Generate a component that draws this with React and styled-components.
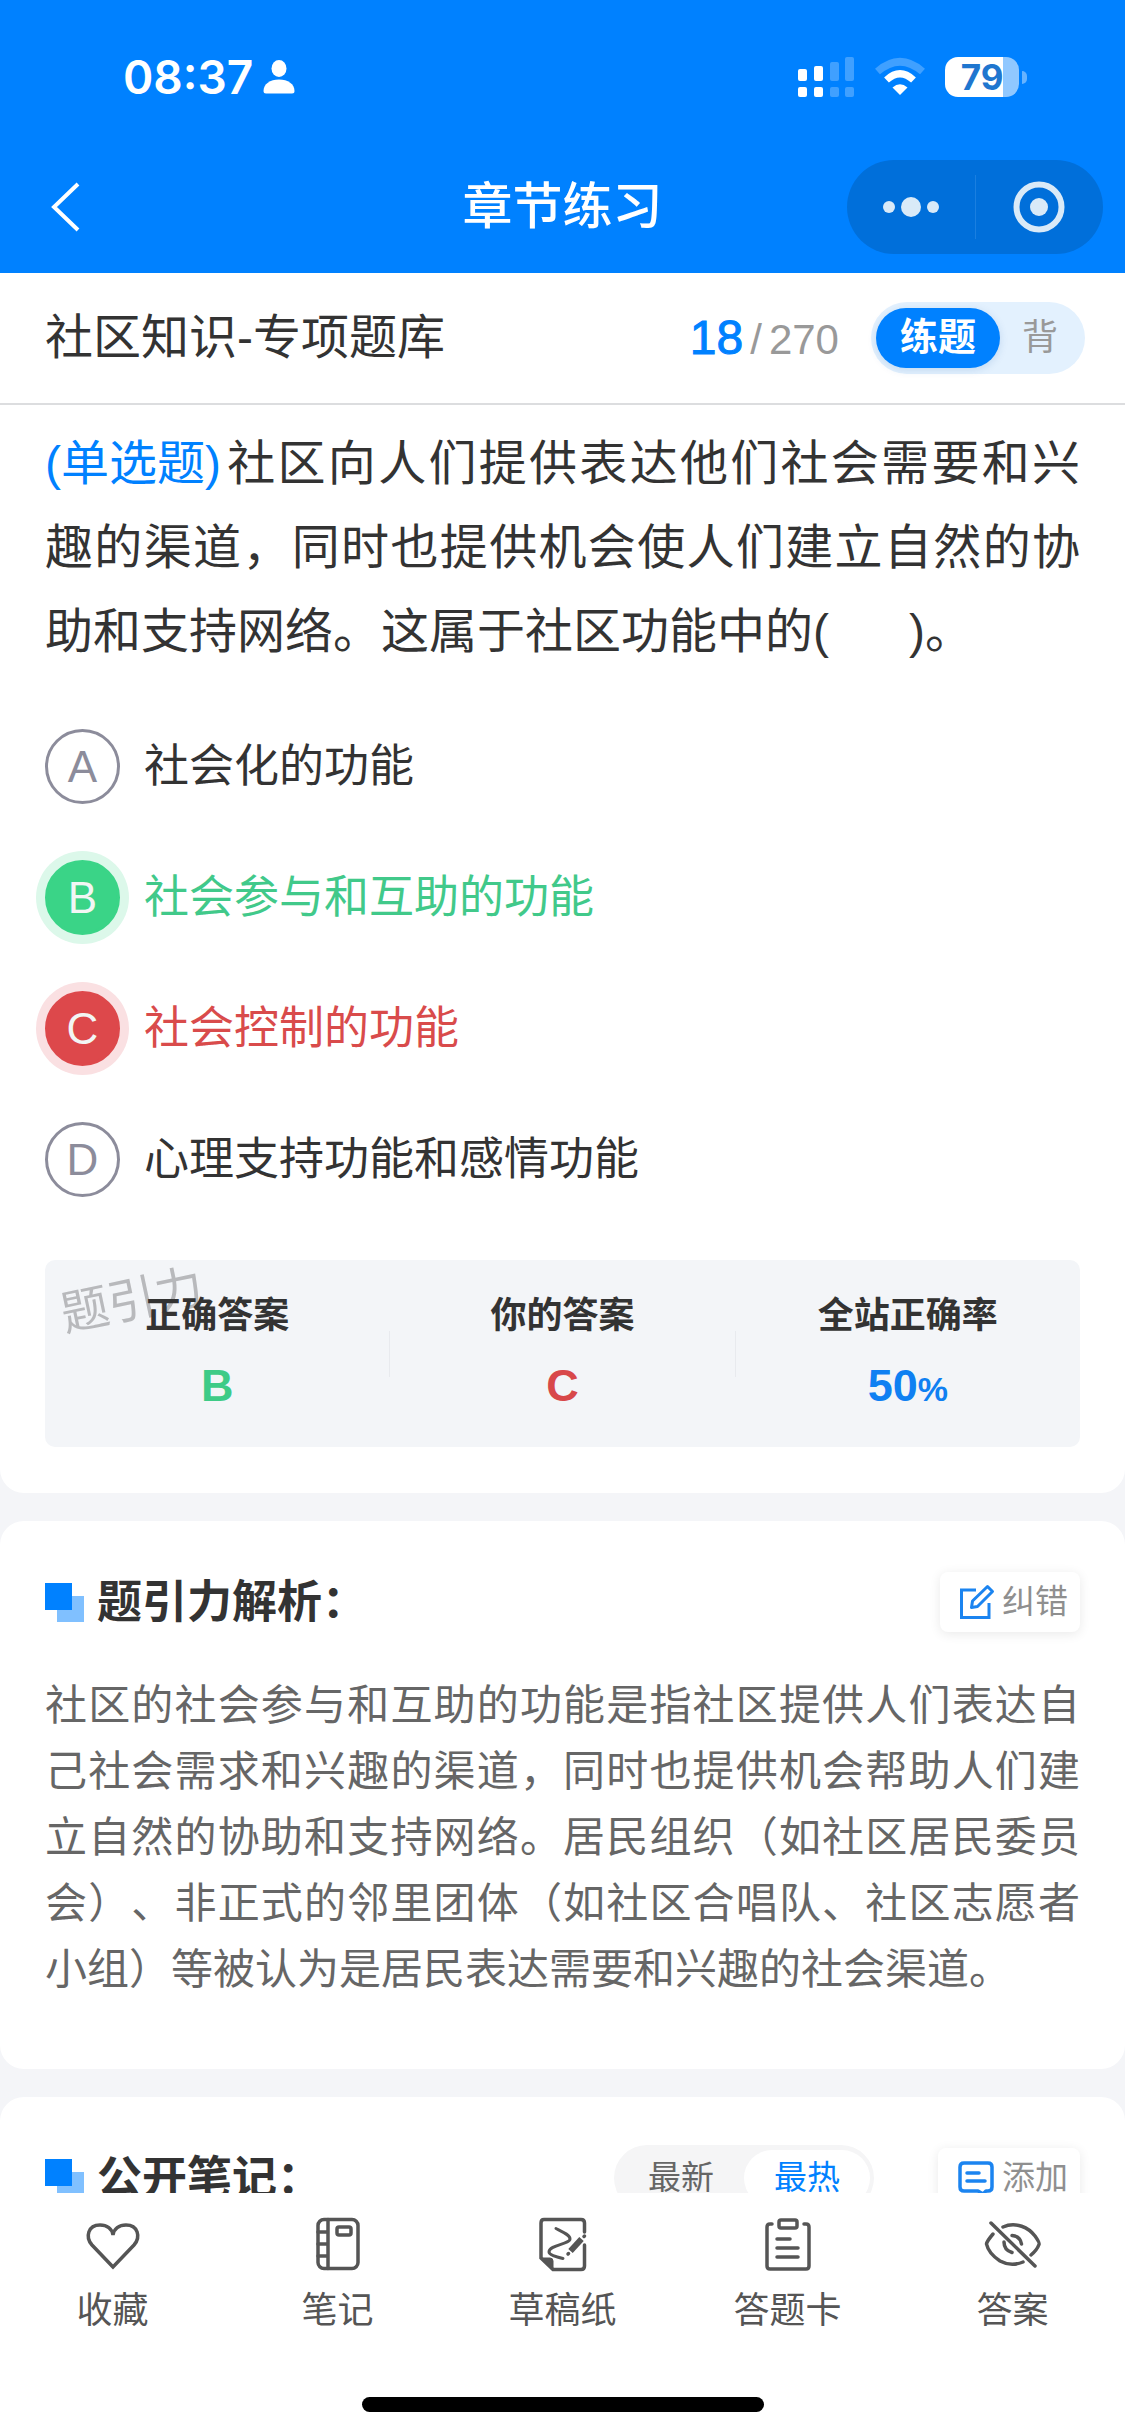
import React from 'react'
import styled, { createGlobalStyle, css } from 'styled-components'

const GlobalStyle = createGlobalStyle`
  * {
    box-sizing: border-box;
  }
  body {
    margin: 0;
    color: #333;
    background: #f4f5f8;
    font-family: 'Liberation Sans', 'Noto Sans CJK SC', sans-serif;
    line-height: 1.4;
    text-spacing-trim: space-all;
  }
  button {
    margin: 0;
    padding: 0;
    border: 0;
    background: none;
    color: inherit;
    font: inherit;
  }
  h1, h2, p {
    margin: 0;
  }
  svg {
    display: block;
    overflow: visible;
  }
`

const StyledPage = styled.div`
  display: flex;
  flex-direction: column;
  height: 100vh;
`

const StyledHeader = styled.header`
  flex: none;
  padding-bottom: 13px;
  background: #0081ff;
  color: #fff;
`

const StyledStatusBar = styled.div`
  display: flex;
  align-items: center;
  justify-content: space-between;
  height: 154px;
  padding: 0 98px 0 123px;
  font-family: Inter, sans-serif;
`

const StyledTime = styled.div`
  display: flex;
  align-items: center;
  gap: 10px;
  font-size: 46px;
  font-weight: 600;
`

const StyledStatusIcons = styled.div`
  display: flex;
  align-items: center;
  gap: 20px;
`

const StyledBattery = styled.div`
  display: flex;
  align-items: center;
  gap: 3px;

  span {
    width: 74px;
    height: 40px;
    border-radius: 13px;
    background: linear-gradient(to right, #fff 79%, #90c8ff 79%);
    color: #1f76cf;
    font-size: 35px;
    font-weight: 700;
    line-height: 40px;
    text-align: center;
  }
  &::after {
    content: '';
    width: 5px;
    height: 13px;
    border-radius: 0 5px 5px 0;
    background: #66b3ff;
  }
`

const StyledNav = styled.nav`
  display: grid;
  grid-template-columns: 1fr auto 1fr;
  align-items: center;
  height: 106px;
  padding: 0 22px;
`

const StyledBack = styled.button`
  justify-self: start;
  padding: 12px 28px;
`

const StyledNavTitle = styled.h1`
  font-size: 50px;
  font-weight: 500;
`

const StyledCapsule = styled.div`
  justify-self: end;
  display: flex;
  align-items: center;
  width: 256px;
  height: 94px;
  border-radius: 47px;
  background: #006fda;

  button {
    display: flex;
    flex: 1;
    justify-content: center;
  }
  button + button {
    border-left: 1px solid #1a7fe0;
    padding: 6px 0;
  }
`

const StyledBankBar = styled.div`
  display: flex;
  flex: none;
  align-items: center;
  height: 132px;
  padding: 0 40px 0 45px;
  border-bottom: 2px solid #dcdddf;
  background: #fff;
`

const StyledBankName = styled.h2`
  flex: 1;
  font-size: 48px;
  font-weight: 400;
`

const StyledCounter = styled.div`
  display: flex;
  align-items: baseline;
  gap: 7px;
  margin-right: 32px;
  color: #999;
  font-size: 42px;

  strong {
    color: #0081ff;
    font-size: 48px;
    font-weight: 400;
    -webkit-text-stroke: 1px #0081ff;
  }
`

const StyledModeSwitch = styled.div`
  display: flex;
  align-items: center;
  height: 72px;
  padding: 0 5px;
  border-radius: 36px;
  background: #e3f1fe;
`

const StyledMode = styled.button`
  height: 60px;
  padding: 0 22px;
  border-radius: 30px;
  color: #999;
  font-size: 36px;

  ${props =>
    props.$active &&
    css`
      padding: 0 24px;
      background: #0081ff;
      color: #fff;
      font-size: 38px;
      font-weight: 700;
      box-shadow: 0 2px 8px rgba(0, 80, 160, 0.15);
    `}
`

const StyledContent = styled.main`
  flex: 1;
  min-height: 0;
  overflow-y: auto;
  scrollbar-width: none;
`

const StyledCard = styled.section`
  margin-top: 28px;
  padding: 48px 45px 66px;
  border-radius: 24px;
  background: #fff;
`

const StyledQuestionCard = styled(StyledCard)`
  margin-top: 0;
  padding: 17px 45px 46px;
  border-radius: 0 0 24px 24px;
`

const StyledQuestion = styled.p`
  font-size: 48px;
  line-height: 84px;
  text-align: justify;

  span {
    display: inline-block;
    margin-right: 4px;
    color: #0081ff;
  }
`

const StyledOptions = styled.div`
  display: flex;
  flex-direction: column;
  gap: 56px;
  margin: 55px 0 63px;
`

const optionColors = {
  right: { fill: '#3ad487', text: '#41c98a', halo: '#dcf8ea' },
  wrong: { fill: '#dd484b', text: '#d94b4b', halo: '#fae0e2' }
}

const StyledOption = styled.label`
  display: flex;
  align-items: center;
  gap: 24px;
  height: 75px;
  color: ${props => (props.$state ? optionColors[props.$state].text : '#333')};
  font-size: 45px;

  input {
    position: absolute;
    opacity: 0;
  }
`

const StyledLetter = styled.span`
  display: flex;
  align-items: center;
  justify-content: center;
  width: 75px;
  height: 75px;
  border: 3px solid #8c8c9b;
  border-radius: 50%;
  color: #8c8c9b;
  font-size: 44px;

  ${props =>
    props.$state &&
    css`
      border-color: ${optionColors[props.$state].fill};
      background: ${optionColors[props.$state].fill};
      box-shadow: 0 0 0 9px ${optionColors[props.$state].halo};
      color: #f2f6f4;
    `}
`

const StyledResult = styled.div`
  position: relative;
  display: flex;
  align-items: center;
  padding: 31px 0;
  border-radius: 10px;
  background: #f3f5f8;
`

const StyledWatermark = styled.span`
  position: absolute;
  top: 11px;
  left: 15px;
  color: #b8b9bc;
  font-size: 48px;
  line-height: 60px;
  transform: rotate(-12deg);
`

const StyledStat = styled.div`
  position: relative;
  flex: 1;
  color: ${props => props.color};
  font-size: 45px;
  font-weight: 700;
  line-height: 60px;
  text-align: center;

  p {
    margin-bottom: 15px;
    color: #333;
    font-size: 36px;
    line-height: 50px;
  }
  small {
    font-size: 34px;
    line-height: 1;
  }
`

const StyledDivider = styled.div`
  width: 1px;
  height: 46px;
  background: #e8eaee;
`

const StyledCardHead = styled.div`
  display: flex;
  align-items: center;
  height: 66px;
`

const StyledCardTitle = styled.h2`
  display: flex;
  flex: 1;
  align-items: center;
  gap: 13px;
  font-size: 45px;
  font-weight: 700;
`

const StyledSmallButton = styled.button`
  display: flex;
  align-items: center;
  gap: 8px;
  height: 60px;
  padding: 0 12px 0 20px;
  border-radius: 8px;
  background: #fff;
  box-shadow: 0 2px 12px rgba(0, 0, 0, 0.09);
  color: #8f8f8f;
  font-size: 33px;
`

const StyledAnalysis = styled.p`
  margin-top: 38px;
  color: #666;
  font-size: 42px;
  line-height: 66px;
  text-align: justify;
`

const StyledSort = styled.div`
  display: flex;
  align-items: center;
  height: 66px;
  margin-right: 64px;
  padding: 0 4px;
  border-radius: 33px;
  background: #f5f5f6;
`

const StyledSortItem = styled.button`
  height: 56px;
  padding: 0 30px;
  border-radius: 28px;
  background: ${props => (props.$active ? '#fff' : 'none')};
  color: ${props => (props.$active ? '#0081ff' : '#666')};
  font-size: 33px;
`

const StyledTabBar = styled.footer`
  flex: none;
  padding: 24px 0;
  background: #fff;
`

const StyledTabs = styled.div`
  display: grid;
  grid-template-columns: repeat(5, 1fr);
`

const StyledTab = styled.button`
  display: flex;
  flex-direction: column;
  align-items: center;
  gap: 15px;
  color: #555;
  font-size: 36px;
  line-height: 50px;
`

const StyledHomeIndicator = styled.div`
  width: 402px;
  height: 15px;
  margin: 61px auto 0;
  border-radius: 8px;
  background: #000;
`

function PersonIcon() {
  return (
    <svg width="32" height="34" viewBox="0 0 32 34" fill="#fff">
      <ellipse cx="16" cy="8.5" rx="7.5" ry="8.5" />
      <path d="M0.5 31C0.5 24 7 19.5 16 19.5S31.5 24 31.5 31Q31.5 33.5 29 33.5H3Q0.5 33.5 0.5 31Z" />
    </svg>
  )
}

function SignalIcon() {
  return (
    <svg width="57" height="40" viewBox="0 0 57 40" fill="#fff">
      <rect x="0" y="12" width="9" height="12" rx="2" />
      <rect x="0" y="30" width="9" height="10" rx="2" />
      <rect x="16" y="9" width="9" height="15" rx="2" />
      <rect x="16" y="30" width="9" height="10" rx="2" />
      <g opacity="0.25">
        <rect x="32" y="5" width="9" height="19" rx="2" />
        <rect x="32" y="30" width="9" height="10" rx="2" />
        <rect x="47" y="0" width="9" height="24" rx="2" />
        <rect x="47" y="30" width="9" height="10" rx="2" />
      </g>
    </svg>
  )
}

function WifiIcon() {
  return (
    <svg width="50" height="38" viewBox="0 0 50 38" fill="none" stroke="#fff">
      <path d="M2.5 13.5Q25 -6 47.5 13.5" strokeWidth="7.5" opacity="0.25" />
      <path d="M11.5 22Q25 9.5 38.5 22" strokeWidth="7" />
      <path d="M17.5 29.5Q25 23 32.5 29.5L25 37Z" fill="#fff" stroke="none" />
    </svg>
  )
}

function BackIcon() {
  return (
    <svg width="30" height="50" viewBox="0 0 30 50" fill="none" stroke="#fff" strokeWidth="4">
      <path d="M28 2L4 25L28 48" />
    </svg>
  )
}

function DotsIcon() {
  return (
    <svg width="56" height="20" viewBox="0 0 56 20" fill="#d9eaf8">
      <circle cx="6" cy="10" r="6" />
      <circle cx="28" cy="10" r="10" />
      <circle cx="50" cy="10" r="6" />
    </svg>
  )
}

function TargetIcon() {
  return (
    <svg width="52" height="52" viewBox="0 0 52 52" fill="none">
      <circle cx="26" cy="26" r="22.5" stroke="#d9eaf8" strokeWidth="6" />
      <circle cx="26" cy="26" r="9" fill="#d9eaf8" />
    </svg>
  )
}

function SquaresIcon() {
  return (
    <svg width="39" height="39" viewBox="0 0 39 39">
      <rect x="12" y="13" width="27" height="26" fill="#80c0ff" />
      <rect width="27" height="27" fill="#0081ff" />
    </svg>
  )
}

function EditIcon() {
  return (
    <svg width="34" height="34" viewBox="2 1 34 34" fill="none" stroke="#1b84f0" strokeWidth="3">
      <path d="M18 6H3.5V33.5H31V19" />
      <path d="M13.500 23.500L14.500 17L29.500 2.500L34.500 7.500L19.500 22.500Z" strokeLinejoin="round" />
    </svg>
  )
}

function NoteIcon() {
  return (
    <svg width="36" height="36" viewBox="0 0 36 36" fill="none" stroke="#1b84f0" strokeWidth="3.5">
      <path d="M20 31H6Q2 31 2 27V7Q2 3 6 3H30Q34 3 34 7V27Q34 31 30 31H28L25 34Z" strokeLinejoin="round" />
      <path d="M9 13H21M9 21H27" strokeLinecap="round" />
    </svg>
  )
}

function TabIcon({ children }) {
  return (
    <svg
      width="54"
      height="54"
      viewBox="0 0 54 54"
      fill="none"
      stroke="#555"
      strokeWidth="3.5"
      strokeLinecap="round"
    >
      {children}
    </svg>
  )
}

function HeartIcon() {
  return (
    <TabIcon>
      <path d="M27 50L6 28C-1 20 2 8 14 8C21 8 26 12 27 18C28 12 33 8 40 8C52 8 55 20 48 28Z" />
    </TabIcon>
  )
}

function NotebookIcon() {
  return (
    <TabIcon>
      <rect x="7" y="2.5" width="40" height="49" rx="6" />
      <path d="M17 2.5V51.5M7 15H17M7 27H17M7 39H17" />
      <rect x="26" y="10" width="14" height="8" rx="2" />
    </TabIcon>
  )
}

function DraftIcon() {
  return (
    <TabIcon>
      <path d="M48.5 15V6Q48.5 2.5 45 2.5H8Q5 2.5 5 6V41L17 52.5H45Q48.5 52.5 48.5 49V28" />
      <path d="M5 41H14Q17 41 17 44V52.5Z" fill="#555" strokeWidth="1" />
      <path d="M20 11.5C27 15 34 18 34 22C34 27 13 28 13 35C13 38 21 40 27 41.5" strokeWidth="3" />
      <path d="M45.500 22L34.500 34" strokeWidth="6" strokeLinecap="butt" />
      <path d="M48.500 19L48 19.500M32.500 36.500L32 37" />
    </TabIcon>
  )
}

function ClipboardIcon() {
  return (
    <TabIcon>
      <path d="M11 7H9Q6 7 6 10V49Q6 52 9 52H45Q48 52 48 49V10Q48 7 45 7H43" />
      <rect x="18" y="3" width="18" height="8" rx="2" />
      <path d="M16 22H29M16 31H37M16 40H37" />
    </TabIcon>
  )
}

function EyeOffIcon() {
  return (
    <TabIcon>
      <path d="M5 6L49 49" />
      <path d="M17 10C30 4 43 11 49 19Q54 26 53 27.5Q51 33 45 38" />
      <path d="M7 17Q1 24 0.5 27C2 34 8 40 14 44Q25 50 37 45" />
      <path d="M26 18.500Q34 19 35.500 27M18 25Q18 33 26 35.500" />
    </TabIcon>
  )
}

const options = [
  { letter: 'A', text: '社会化的功能' },
  { letter: 'B', text: '社会参与和互助的功能', state: 'right' },
  { letter: 'C', text: '社会控制的功能', state: 'wrong' },
  { letter: 'D', text: '心理支持功能和感情功能' }
]

const tabs = [
  { name: '收藏', Icon: HeartIcon },
  { name: '笔记', Icon: NotebookIcon },
  { name: '草稿纸', Icon: DraftIcon },
  { name: '答题卡', Icon: ClipboardIcon },
  { name: '答案', Icon: EyeOffIcon }
]

export default function App() {
  function renderOption({ letter, text, state }) {
    return (
      <StyledOption key={letter} $state={state}>
        <input type="radio" name="answer" value={letter} defaultChecked={state === 'wrong'} />
        <StyledLetter $state={state}>{letter}</StyledLetter>
        {text}
      </StyledOption>
    )
  }

  return (
    <StyledPage>
      <GlobalStyle />
      <StyledHeader>
        <StyledStatusBar>
          <StyledTime>
            08:37
            <PersonIcon />
          </StyledTime>
          <StyledStatusIcons>
            <SignalIcon />
            <WifiIcon />
            <StyledBattery>
              <span>79</span>
            </StyledBattery>
          </StyledStatusIcons>
        </StyledStatusBar>
        <StyledNav>
          <StyledBack aria-label="返回">
            <BackIcon />
          </StyledBack>
          <StyledNavTitle>章节练习</StyledNavTitle>
          <StyledCapsule>
            <button aria-label="更多">
              <DotsIcon />
            </button>
            <button aria-label="关闭">
              <TargetIcon />
            </button>
          </StyledCapsule>
        </StyledNav>
      </StyledHeader>

      <StyledBankBar>
        <StyledBankName>社区知识-专项题库</StyledBankName>
        <StyledCounter>
          <strong>18</strong>
          <span>/</span>
          <span>270</span>
        </StyledCounter>
        <StyledModeSwitch>
          <StyledMode $active>练题</StyledMode>
          <StyledMode>背</StyledMode>
        </StyledModeSwitch>
      </StyledBankBar>

      <StyledContent>
        <StyledQuestionCard>
          <StyledQuestion>
            <span>(单选题)</span>
            社区向人们提供表达他们社会需要和兴趣的渠道，同时也提供机会使人们建立自然的协助和支持网络。这属于社区功能中的(
            {'\u00a0'.repeat(6)})。
          </StyledQuestion>
          <StyledOptions>{options.map(renderOption)}</StyledOptions>
          <StyledResult>
            <StyledWatermark>题引力</StyledWatermark>
            <StyledStat color="#3ecb87">
              <p>正确答案</p>B
            </StyledStat>
            <StyledDivider />
            <StyledStat color="#d8484a">
              <p>你的答案</p>C
            </StyledStat>
            <StyledDivider />
            <StyledStat color="#0f80f2">
              <p>全站正确率</p>
              50<small>%</small>
            </StyledStat>
          </StyledResult>
        </StyledQuestionCard>

        <StyledCard>
          <StyledCardHead>
            <StyledCardTitle>
              <SquaresIcon />
              题引力解析：
            </StyledCardTitle>
            <StyledSmallButton>
              <EditIcon />
              纠错
            </StyledSmallButton>
          </StyledCardHead>
          <StyledAnalysis>
            社区的社会参与和互助的功能是指社区提供人们表达自己社会需求和兴趣的渠道，同时也提供机会帮助人们建立自然的协助和支持网络。居民组织（如社区居民委员会）、非正式的邻里团体（如社区合唱队、社区志愿者小组）等被认为是居民表达需要和兴趣的社会渠道。
          </StyledAnalysis>
        </StyledCard>

        <StyledCard>
          <StyledCardHead>
            <StyledCardTitle>
              <SquaresIcon />
              公开笔记：
            </StyledCardTitle>
            <StyledSort>
              <StyledSortItem>最新</StyledSortItem>
              <StyledSortItem $active>最热</StyledSortItem>
            </StyledSort>
            <StyledSmallButton>
              <NoteIcon />
              添加
            </StyledSmallButton>
          </StyledCardHead>
        </StyledCard>
      </StyledContent>

      <StyledTabBar>
        <StyledTabs>
          {tabs.map(({ name, Icon }) => (
            <StyledTab key={name}>
              <Icon />
              {name}
            </StyledTab>
          ))}
        </StyledTabs>
        <StyledHomeIndicator />
      </StyledTabBar>
    </StyledPage>
  )
}
